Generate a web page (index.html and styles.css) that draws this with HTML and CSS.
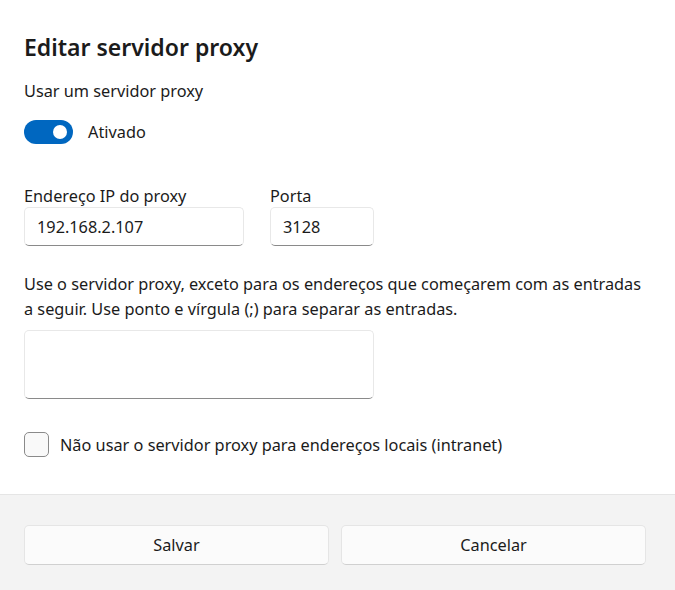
FILE: index.html
```html
<!DOCTYPE html>
<html lang="pt-BR">
<head>
<meta charset="utf-8">
<title>Editar servidor proxy</title>
<link rel="stylesheet" href="styles.css">
</head>
<body>
<div class="dialog">
  <div class="content">
    <h1 class="title">Editar servidor proxy</h1>
    <div class="label-main">Usar um servidor proxy</div>
    <div class="toggle-row">
      <span class="toggle"><span class="knob"></span></span>
      <span class="toggle-text">Ativado</span>
    </div>
    <div class="fields">
      <div class="field field-ip">
        <div class="field-label">Endereço IP do proxy</div>
        <div class="input">192.168.2.107</div>
      </div>
      <div class="field field-port">
        <div class="field-label">Porta</div>
        <div class="input">3128</div>
      </div>
    </div>
    <p class="desc">Use o servidor proxy, exceto para os endereços que começarem com as entradas a seguir. Use ponto e vírgula (;) para separar as entradas.</p>
    <div class="textarea"></div>
    <div class="check-row">
      <span class="checkbox"></span>
      <span class="check-text">Não usar o servidor proxy para endereços locais (intranet)</span>
    </div>
  </div>
  <div class="footer">
    <button class="btn">Salvar</button>
    <button class="btn">Cancelar</button>
  </div>
</div>
</body>
</html>
```
FILE: styles.css
```css
html, body {
  margin: 0;
  padding: 0;
  background: #ffffff;
}
body {
  font-family: "Noto Sans", "Open Sans", sans-serif;
  font-size: 16.3px;
  color: #1b1b1b;
}
.dialog {
  width: 675px;
  height: 590px;
  display: flex;
  flex-direction: column;
}
.content {
  flex: 1;
  padding: 31px 29px 0 24px;
}
.title {
  margin: 0;
  font-size: 23px;
  font-weight: 600;
  line-height: 32px;
}
.label-main {
  margin-top: 16px;
  line-height: 24px;
}
.toggle-row {
  margin-top: 17px;
  display: flex;
  align-items: center;
  gap: 15px;
  height: 24px;
}
.toggle {
  width: 49px;
  height: 24px;
  border-radius: 12px;
  background: #0067c0;
  display: flex;
  align-items: center;
  justify-content: flex-end;
  padding-right: 6px;
  box-sizing: border-box;
}
.knob {
  width: 14px;
  height: 14px;
  border-radius: 50%;
  background: #ffffff;
}
.fields {
  margin-top: 41px;
  display: flex;
  gap: 26px;
}
.field-label {
  line-height: 22px;
}
.input {
  box-sizing: border-box;
  height: 39px;
  background: #ffffff;
  border: 1px solid #e8e8e8;
  border-bottom-color: #8a8a8a;
  border-radius: 5px;
  padding: 0 12px;
  display: flex;
  align-items: center;
}
.field-ip .input { width: 220px; }
.field-port .input { width: 104px; }
.desc {
  margin: 26px 0 0;
  line-height: 25px;
}
.textarea {
  margin-top: 8px;
  box-sizing: border-box;
  width: 350px;
  height: 69px;
  border: 1px solid #e8e8e8;
  border-bottom-color: #8a8a8a;
  border-radius: 5px;
}
.check-row {
  margin-top: 33px;
  display: flex;
  align-items: center;
  gap: 11px;
}
.checkbox {
  box-sizing: border-box;
  width: 25px;
  height: 25px;
  border: 1px solid #8a8a8a;
  border-radius: 5px;
  background: #f9f9f9;
}
.footer {
  background: #f3f3f3;
  border-top: 1px solid #e5e5e5;
  height: 96px;
  box-sizing: border-box;
  padding: 30px 29px 0 24px;
  display: grid;
  grid-template-columns: 1fr 1fr;
  column-gap: 12px;
  align-items: start;
}
.btn {
  height: 40px;
  font-family: inherit;
  font-size: 16.3px;
  color: #1b1b1b;
  background: #fbfbfb;
  border: 1px solid #e5e5e5;
  border-bottom-color: #d0d0d0;
  border-radius: 5px;
  padding: 0;
}
```
